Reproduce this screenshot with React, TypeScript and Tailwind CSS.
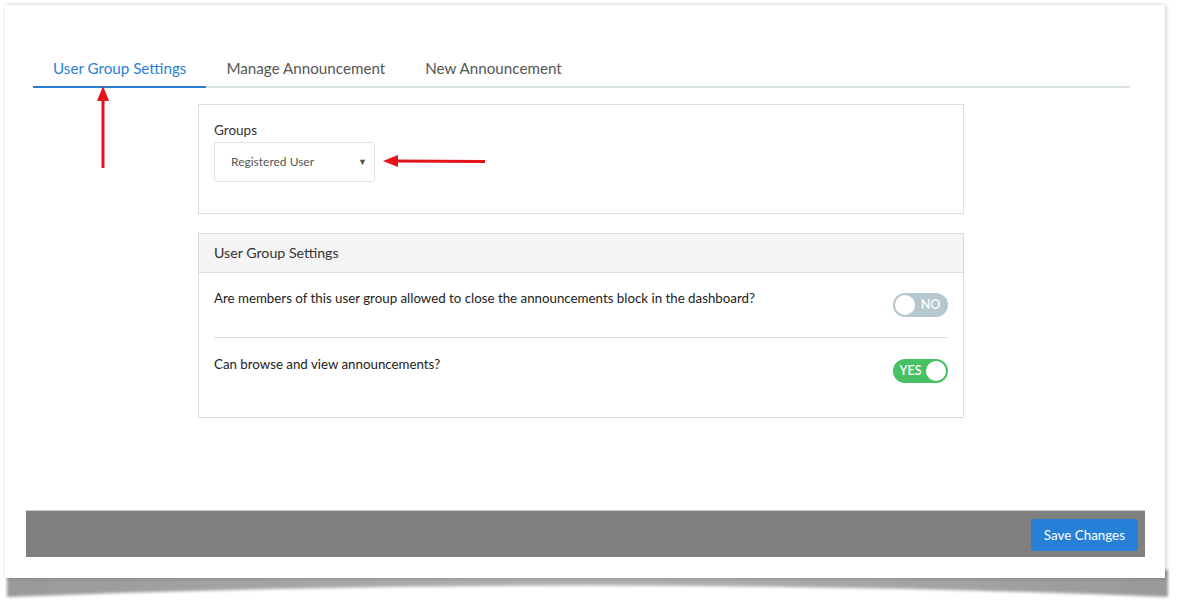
import React from "react";

const tabs = ["User Group Settings", "Manage Announcement", "New Announcement"];

function Toggle({ on }: { on: boolean }) {
  return (
    <div
      className={`mt-[5px] flex h-[24px] w-[55px] shrink-0 items-center rounded-full p-[2px] ${
        on ? "flex-row-reverse bg-[#48c064]" : "bg-[#b5c7cf]"
      }`}
    >
      <div className="h-[20px] w-[20px] rounded-full bg-white" />
      <span className="flex-1 text-center text-[12.5px] font-semibold leading-none text-white">
        {on ? "YES" : "NO"}
      </span>
    </div>
  );
}

export default function App() {
  return (
    <div
      className="relative h-[607px] w-[1179px] overflow-hidden bg-white pl-[5px] pt-[5px]"
      style={{ fontFamily: "Lato, 'Noto Sans', sans-serif" }}
    >
      {/* curled paper shadow under the frame */}
      <svg className="absolute left-0 top-[560px] z-0" width="1179" height="47" viewBox="0 0 1179 47">
        <defs>
          <filter id="blur" x="-5%" y="-50%" width="110%" height="200%">
            <feGaussianBlur stdDeviation="1.6" />
          </filter>
          <linearGradient id="shade" x1="0" x2="1" y1="0" y2="0">
            <stop offset="0" stopColor="#888" />
            <stop offset="0.3" stopColor="#999" />
            <stop offset="0.5" stopColor="#a3a3a3" />
            <stop offset="0.7" stopColor="#999" />
            <stop offset="1" stopColor="#888" />
          </linearGradient>
        </defs>
        <path d="M7 10 L1168 10 L1168 37 Q 587 14 7 37 Z" fill="url(#shade)" filter="url(#blur)" opacity="0.85" />
      </svg>

      <div className="relative z-10 flex h-[573px] w-[1160px] flex-col bg-white shadow-[1px_0_4px_rgba(0,0,0,0.22)]">
        {/* tabs */}
        <div className="ml-[28px] mt-[45px] flex h-[38px] w-[1097px] border-b-2 border-[#d8e2e2]">
          {tabs.map((t, i) => (
            <div
              key={t}
              className={`-mb-[2px] flex items-center px-[20px] text-[15.2px] ${
                i === 0
                  ? "border-b-2 border-[#2a7fd4] text-[#2a7fd4]"
                  : "border-b-2 border-transparent text-[#555]"
              }`}
            >
              {t}
            </div>
          ))}
        </div>

        <div className="ml-[193px] mt-[16px] w-[766px]">
          {/* groups card */}
          <div className="border border-[#dcdcdc] px-[15px] pb-[31px] pt-[15px]">
            <div className="text-[13.5px] leading-[20px] text-[#333]">Groups</div>
            <div className="mt-[2px] flex h-[40px] w-[161px] items-center justify-between rounded-[3px] border border-[#dde3e8] pl-[16px] pr-[7px]">
              <span className="text-[12px] text-[#555]">Registered User</span>
              <span className="text-[9px] text-[#555]">▼</span>
            </div>
          </div>

          {/* settings card */}
          <div className="mt-[19px] border border-[#dcdcdc]">
            <div className="flex h-[39px] items-center border-b border-[#dcdcdc] bg-[#f5f5f5] px-[15px] text-[14.2px] text-[#333]">
              User Group Settings
            </div>
            <div className="px-[15px] pb-[14px]">
              <div className="flex justify-between border-b border-[#dedede] pb-[20px] pt-[15px]">
                <span className="text-[13.3px] leading-[20px] text-[#222]">
                  Are members of this user group allowed to close the announcements block in the dashboard?
                </span>
                <Toggle on={false} />
              </div>
              <div className="flex justify-between pb-[20px] pt-[16px]">
                <span className="text-[13.3px] leading-[20px] text-[#222]">Can browse and view announcements?</span>
                <Toggle on={true} />
              </div>
            </div>
          </div>
        </div>

        <div className="flex-1" />

        {/* footer bar */}
        <div className="mb-[21px] ml-[21px] flex h-[47px] w-[1119px] items-start justify-end border-t border-[#c9c9c9] bg-[#808080] pr-[7px] pt-[8px]">
          <button className="h-[32px] rounded-[3px] bg-[#2680d8] px-[13px] text-[13.4px] text-white">Save Changes</button>
        </div>
      </div>

      {/* annotation arrows */}
      <svg className="absolute left-[95px] top-[84px] z-20" width="18" height="88" viewBox="0 0 18 88">
        <line x1="8" y1="14" x2="8" y2="84" stroke="#e3121b" strokeWidth="3" />
        <polygon points="8,2 2,17 14,17" fill="#e3121b" />
      </svg>
      <svg className="absolute left-[380px] top-[152px] z-20" width="110" height="18" viewBox="0 0 110 18">
        <line x1="14" y1="9" x2="105" y2="9.5" stroke="#e3121b" strokeWidth="3" />
        <polygon points="3,9 18,3 18,15" fill="#e3121b" />
      </svg>
    </div>
  );
}
